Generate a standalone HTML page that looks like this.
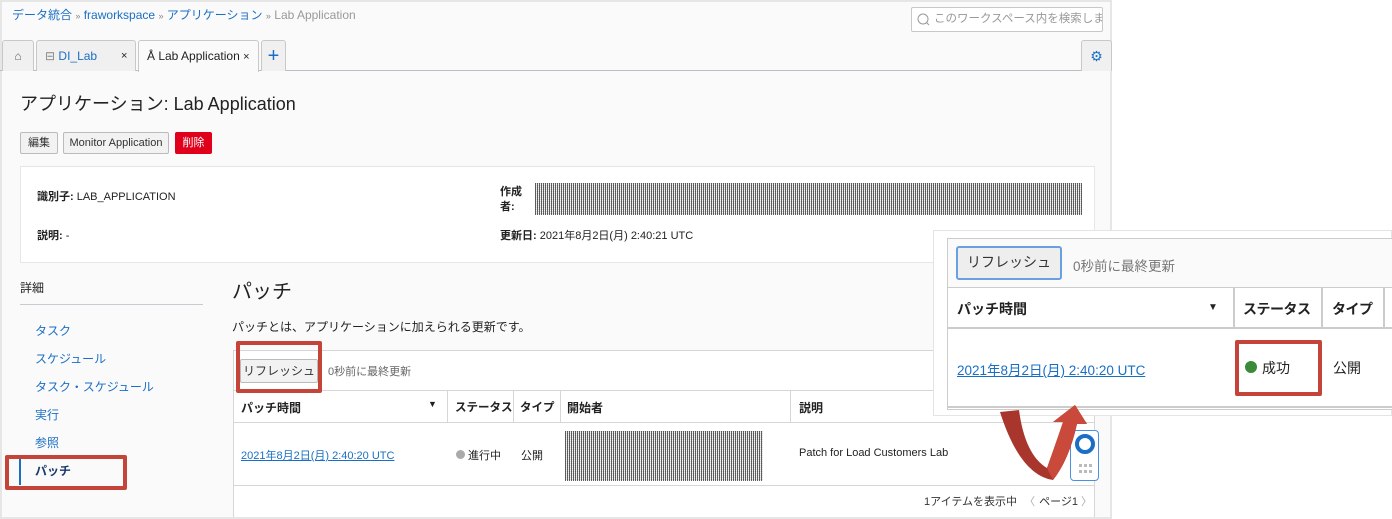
<!DOCTYPE html>
<html><head><meta charset="utf-8">
<style>
*{box-sizing:border-box;margin:0;padding:0}
body{width:1392px;height:519px;background:#fff;font-family:"Liberation Sans","Noto Sans CJK JP",sans-serif;font-size:12px;color:#222;position:relative;overflow:hidden}
.a{position:absolute;white-space:nowrap}
.main{left:0;top:0;width:1112px;height:519px;background:#fafafa;border:2px solid #e6e6e6}
.blue{color:#1a6fc4}
.btn{position:absolute;border:1px solid #bbb;background:#f2f2f2;border-radius:2px;font-size:11px;text-align:center;line-height:20px;color:#333;white-space:nowrap}
.tab{position:absolute;top:40px;height:31px;border:1px solid #c8c8c8;border-bottom:none;background:#f0f0f0;border-radius:3px 3px 0 0;font-size:12px;line-height:30px;white-space:nowrap}
.pat{position:absolute;background-color:#ddd;background-image:repeating-linear-gradient(90deg,rgba(0,0,0,.6) 0 1px,transparent 1px 2px),repeating-linear-gradient(0deg,rgba(255,255,255,.7) 0 1px,transparent 1px 2px)}
.red{position:absolute;border:4px solid #c5443a;border-radius:2px}
.nav{position:absolute;left:35px;color:#1a6fc4;font-size:12px}
.th{position:absolute;font-weight:bold;font-size:12px;white-space:nowrap}
.vl{position:absolute;width:1px;background:#d6d6d6}
</style></head><body>
<div class="a main"></div>
<div class="a" style="left:12px;top:6px;font-size:12px"><span class="blue">データ統合</span> <span style="font-size:9px;color:#888">»</span> <span class="blue">fraworkspace</span> <span style="font-size:9px;color:#888">»</span> <span class="blue">アプリケーション</span> <span style="font-size:9px;color:#888">»</span> <span style="color:#999">Lab Application</span></div>
<div class="a" style="left:911px;top:7px;width:192px;height:25px;border:1px solid #c8c8c8;background:#fff;border-radius:2px;font-size:11.5px;color:#999;line-height:23px;padding-left:22px;overflow:hidden">このワークスペース内を検索します
<svg class="a" style="left:5px;top:5px" width="13" height="13"><circle cx="6" cy="6" r="5" fill="none" stroke="#999"/><line x1="9.5" y1="9.5" x2="12" y2="12" stroke="#999"/></svg></div>
<div class="a" style="left:0;top:70px;width:1112px;height:1px;background:#b8bec6"></div>
<div class="tab" style="left:2px;width:32px;text-align:center;color:#666">⌂</div>
<div class="tab" style="left:36px;width:100px;padding-left:8px"><span style="color:#888">⊟</span> <span class="blue">DI_Lab</span><span class="a" style="left:84px;font-size:11px">×</span></div>
<div class="tab" style="left:138px;width:121px;background:#fafafa;height:32px;padding-left:8px">Å Lab Application <span style="font-size:11px">×</span></div>
<div class="tab" style="left:261px;width:25px;text-align:center;color:#1a6fc4;font-size:20px">+</div>
<div class="tab" style="left:1081px;width:31px;text-align:center;color:#1a6fc4;font-size:14px">⚙</div>
<div class="a" style="left:20px;top:90px;font-size:18px;color:#222">アプリケーション: Lab Application</div>
<div class="btn" style="left:20px;top:132px;width:38px;height:22px">編集</div>
<div class="btn" style="left:63px;top:132px;width:106px;height:22px">Monitor Application</div>
<div class="btn" style="left:175px;top:132px;width:37px;height:22px;background:#e0001b;border-color:#e0001b;color:#fff">削除</div>
<div class="a" style="left:20px;top:166px;width:1075px;height:97px;border:1px solid #e6e6e6;background:#fff"></div>
<div class="a" style="left:37px;top:188px;font-size:11px"><b>識別子:</b> LAB_APPLICATION</div>
<div class="a" style="left:37px;top:227px;font-size:11px"><b>説明:</b> -</div>
<div class="a" style="left:500px;top:185px;font-size:11px;line-height:15px;font-weight:bold">作成<br>者:</div>
<div class="pat" style="left:535px;top:183px;width:547px;height:32px"></div>
<div class="a" style="left:500px;top:227px;font-size:11px"><b>更新日:</b> 2021年8月2日(月) 2:40:21 UTC</div>
<div class="a" style="left:20px;top:279px;font-size:12px">詳細</div>
<div class="a" style="left:20px;top:304px;width:183px;height:1px;background:#c8ccd2"></div>
<div class="nav" style="top:322px">タスク</div>
<div class="nav" style="top:350px">スケジュール</div>
<div class="nav" style="top:378px">タスク・スケジュール</div>
<div class="nav" style="top:406px">実行</div>
<div class="nav" style="top:434px">参照</div>
<div class="nav" style="top:462px;color:#1a3a6a;font-weight:bold">パッチ</div>
<div class="a" style="left:19px;top:455px;width:2px;height:30px;background:#1a6fc4"></div>
<div class="red" style="left:5px;top:455px;width:122px;height:35px"></div>
<div class="a" style="left:232px;top:275px;font-size:20px">パッチ</div>
<div class="a" style="left:232px;top:318px;font-size:12px">パッチとは、アプリケーションに加えられる更新です。</div>
<div class="a" style="left:233px;top:350px;width:862px;height:167px;border:1px solid #d6d6d6;border-bottom:none;background:#fff"></div>
<div class="btn" style="left:240px;top:359px;width:78px;height:24px;line-height:22px;font-size:12px">リフレッシュ</div>
<div class="a" style="left:328px;top:363px;font-size:11px;color:#666">0秒前に最終更新</div>
<div class="a" style="left:233px;top:390px;width:862px;height:1px;background:#d6d6d6"></div>
<div class="a" style="left:233px;top:422px;width:862px;height:1px;background:#d6d6d6"></div>
<div class="a" style="left:233px;top:485px;width:862px;height:1px;background:#d6d6d6"></div>
<div class="vl" style="left:447px;top:390px;height:32px"></div>
<div class="vl" style="left:513px;top:390px;height:32px"></div>
<div class="vl" style="left:560px;top:390px;height:32px"></div>
<div class="vl" style="left:790px;top:390px;height:32px"></div>
<div class="th" style="left:241px;top:399px">パッチ時間</div>
<div class="a" style="left:428px;top:399px;font-size:9px">▼</div>
<div class="th" style="left:455px;top:399px;font-size:11.5px">ステータス</div>
<div class="th" style="left:520px;top:399px;font-size:11.5px">タイプ</div>
<div class="th" style="left:567px;top:399px">開始者</div>
<div class="th" style="left:799px;top:399px">説明</div>
<div class="a blue" style="left:241px;top:447px;font-size:11px;text-decoration:underline">2021年8月2日(月) 2:40:20 UTC</div>
<div class="a" style="left:456px;top:447px;font-size:11px"><span style="display:inline-block;width:9px;height:9px;border-radius:50%;background:#aaa"></span> 進行中</div>
<div class="a" style="left:521px;top:447px;font-size:11px">公開</div>
<div class="pat" style="left:565px;top:431px;width:198px;height:50px"></div>
<div class="a" style="left:799px;top:447px;font-size:11px">Patch for Load Customers Lab</div>
<div class="a" style="left:924px;top:493px;font-size:11px;color:#333">1アイテムを表示中 <span style="color:#aaa;margin:0 4px">〈</span>ページ1 <span style="color:#aaa">〉</span></div>
<div class="red" style="left:236px;top:341px;width:86px;height:52px"></div>
<div class="a" style="left:1070px;top:430px;width:29px;height:51px;border:1px solid #4a90e2;border-radius:4px;background:#fff"><svg width="27" height="49"><circle cx="14" cy="13" r="8" fill="none" stroke="#1a6fc4" stroke-width="4"/><g fill="#bbb"><rect x="8" y="33" width="3" height="3"/><rect x="13" y="33" width="3" height="3"/><rect x="18" y="33" width="3" height="3"/><rect x="8" y="39" width="3" height="3"/><rect x="13" y="39" width="3" height="3"/><rect x="18" y="39" width="3" height="3"/></g></svg></div>
<!-- overlay -->
<div class="a" style="left:933px;top:230px;width:459px;height:186px;background:#fff;border:1px solid #e4e4e4"></div>
<div class="a" style="left:947px;top:238px;width:445px;height:172px;border:1px solid #ccc;border-right:none;background:#fff"></div>
<div class="a" style="left:947px;top:238px;width:445px;height:50px;background:#fafafa;border:1px solid #ccc;border-right:none"></div>
<div class="btn" style="left:956px;top:246px;width:106px;height:34px;border:2px solid #6aa0e0;border-radius:3px;background:#eee;font-size:14px;line-height:29px">リフレッシュ</div>
<div class="a" style="left:1073px;top:255px;font-size:13.5px;color:#777">0秒前に最終更新</div>
<div class="a" style="left:947px;top:327px;width:445px;height:2px;background:#ccc"></div>
<div class="a" style="left:1233px;top:288px;width:2px;height:39px;background:#ccc"></div>
<div class="a" style="left:1321px;top:288px;width:2px;height:39px;background:#ccc"></div>
<div class="a" style="left:1383px;top:288px;width:2px;height:39px;background:#ccc"></div>
<div class="th" style="left:957px;top:299px;font-size:14px">パッチ時間</div>
<div class="a" style="left:1208px;top:302px;font-size:10px">▼</div>
<div class="th" style="left:1243px;top:299px;font-size:14px;letter-spacing:-0.5px">ステータス</div>
<div class="th" style="left:1332px;top:299px;font-size:14px;letter-spacing:-0.5px">タイプ</div>
<div class="a blue" style="left:957px;top:359px;font-size:13.5px;text-decoration:underline">2021年8月2日(月) 2:40:20 UTC</div>
<div class="a" style="left:1245px;top:361px;width:12px;height:12px;border-radius:50%;background:#3a8a3a"></div>
<div class="a" style="left:1262px;top:358px;font-size:14px">成功</div>
<div class="a" style="left:1333px;top:358px;font-size:14px">公開</div>
<div class="a" style="left:947px;top:406px;width:445px;height:2px;background:#ccc"></div>
<div class="red" style="left:1235px;top:340px;width:87px;height:56px"></div>
<svg class="a" style="left:995px;top:400px" width="95" height="85"><path d="M5 12 L24 10 Q30 55 52 68 Q62 40 68 22 L58 22 L80 5 L92 24 L82 24 Q74 60 58 80 Q25 75 5 12Z" fill="#a8362c"/><path d="M52 68 Q62 40 68 22 L58 22 L80 5 L92 24 L82 24 Q74 60 58 80Z" fill="#c9493a"/></svg>
</body></html>
